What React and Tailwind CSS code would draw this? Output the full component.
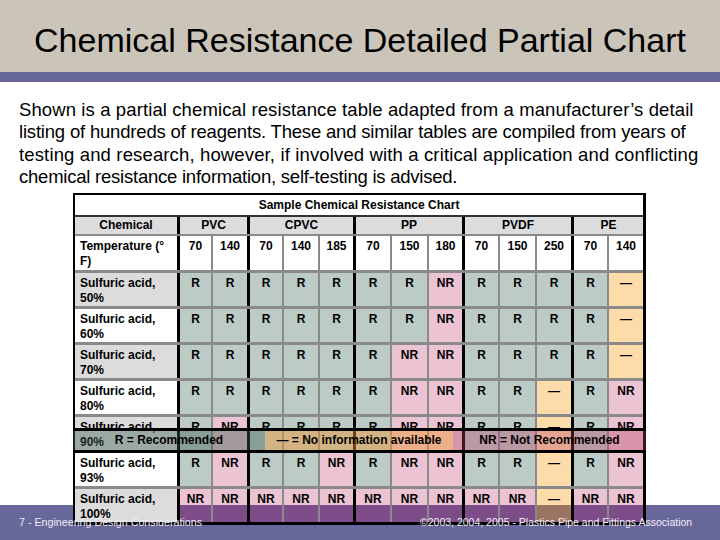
import React from "react";

// column widths incl. right border; group ends get a black rule
const cols = [
  "w-[33px] border-r-2 border-r-[#8a8a8a]",
  "w-[37px] border-r-[3px] border-r-black",
  "w-[34px] border-r-2 border-r-[#8a8a8a]",
  "w-[36px] border-r-2 border-r-[#8a8a8a]",
  "w-[36px] border-r-[3px] border-r-black",
  "w-[36px] border-r-2 border-r-[#8a8a8a]",
  "w-[37px] border-r-2 border-r-[#8a8a8a]",
  "w-[36px] border-r-[3px] border-r-black",
  "w-[35px] border-r-2 border-r-[#8a8a8a]",
  "w-[37px] border-r-2 border-r-[#8a8a8a]",
  "w-[37px] border-r-[3px] border-r-black",
  "w-[35px] border-r-2 border-r-[#8a8a8a]",
  "w-[34px]",
];

const groups = [
  { name: "PVC", cls: "w-[70px] border-r-[3px] border-r-black" },
  { name: "CPVC", cls: "w-[106px] border-r-[3px] border-r-black" },
  { name: "PP", cls: "w-[109px] border-r-[3px] border-r-black" },
  { name: "PVDF", cls: "w-[109px] border-r-[3px] border-r-black" },
  { name: "PE", cls: "w-[69px]" },
];

const temps = ["70", "140", "70", "140", "185", "70", "150", "180", "70", "150", "250", "70", "140"];

const rows = [
  { pct: "50%", shade: true, v: "R R R R R R R NR R R R R —" },
  { pct: "60%", shade: false, v: "R R R R R R R NR R R R R —" },
  { pct: "70%", shade: true, v: "R R R R R R NR NR R R R R —" },
  { pct: "80%", shade: false, v: "R R R R R R NR NR R R — R NR" },
  { pct: "90%", shade: true, v: "R NR R R R R NR NR R R — R NR", legend: true },
  { pct: "93%", shade: false, v: "R NR R R NR R NR NR R R — R NR" },
  { pct: "100%", shade: true, v: "NR NR NR NR NR NR NR NR NR NR — NR NR", last: true },
];

const cellBg = {
  R: "bg-[#bccbc5]",
  NR: "bg-[#ebc3d2]",
  "—": "bg-[#fddcaa]",
};

// bottom row sits partly over the purple footer band
const lastBg = {
  R: "bg-[linear-gradient(#bccbc5_16px,#5f6f8c_16px)]",
  NR: "bg-[linear-gradient(#ebc3d2_16px,#7d4c89_16px)]",
  "—": "bg-[linear-gradient(#fddcaa_16px,#9c7463_16px)]",
};

const Legend = () => (
  <div className="absolute left-[-2px] top-[11px] h-[25px] w-[573px] border-y-[3px] border-black flex z-10 text-[12px] font-bold text-black">
    <div className="w-[192px] bg-[rgba(60,90,80,0.4)] flex items-center justify-center">
      R = Recommended
    </div>
    <div className="w-[188px] bg-[rgba(240,150,50,0.45)] flex items-center justify-center">
      — = No information available
    </div>
    <div className="w-[193px] bg-[rgba(180,60,100,0.35)] flex items-center justify-center">
      NR = Not Recommended
    </div>
  </div>
);

const ChemTable = () => (
  <div className="relative z-10 ml-[73px] mt-[5px] w-[573px] border-l-2 border-t-2 border-r-[3px] border-b-[3px] border-black bg-white text-[12px] font-bold text-black leading-[14.5px]">
    <div className="h-[22px] border-b-2 border-b-[#333] flex items-center justify-center">
      Sample Chemical Resistance Chart
    </div>

    <div className="h-[19px] flex border-b-2 border-b-[#8a8a8a] bg-[#dcdcdc]">
      <div className="w-[105px] border-r-[3px] border-r-black flex items-center justify-center">
        Chemical
      </div>
      {groups.map((g) => (
        <div key={g.name} className={`${g.cls} flex items-center justify-center`}>
          {g.name}
        </div>
      ))}
    </div>

    <div className="h-[37px] flex border-b-[3px] border-b-[#8a8a8a]">
      <div className="w-[105px] border-r-[3px] border-r-black pl-[5px] pt-[3px]">
        Temperature (°
        <br />F)
      </div>
      {temps.map((t, i) => (
        <div key={i} className={`${cols[i]} text-center pt-[3px]`}>
          {t}
        </div>
      ))}
    </div>

    {rows.map((r) => {
      const vals = r.v.split(" ");
      return (
        <div
          key={r.pct}
          className={`relative flex ${r.last ? "h-[33px]" : "h-[36px] border-b-[3px] border-b-[#8a8a8a]"}`}
        >
          <div
            className={`w-[105px] border-r-[3px] border-r-black pl-[5px] pt-[3px] ${r.shade ? "bg-[#dcdcdc]" : "bg-white"}`}
          >
            Sulfuric acid,
            <br />
            {r.pct}
          </div>
          {vals.map((v, i) => (
            <div
              key={i}
              className={`${cols[i]} ${r.last ? lastBg[v] : cellBg[v]} text-center pt-[3px]`}
            >
              {v}
            </div>
          ))}
          {r.legend && <Legend />}
        </div>
      );
    })}
  </div>
);

const App = () => {
  return (
    <div className="relative w-[720px] h-[540px] overflow-hidden bg-white font-['Liberation_Sans',Arial,sans-serif] text-black">
      <div className="h-[72px] bg-[#cbc5b9] flex items-center justify-center pt-2">
        <h1 className="text-[34px] leading-none">Chemical Resistance Detailed Partial Chart</h1>
      </div>
      <div className="h-[10px] bg-[#676799]" />

      <div className="px-[19px] pt-[17px] text-[18.5px] leading-[22.3px] whitespace-nowrap">
        <p className="tracking-[0.11px]">
          Shown is a partial chemical resistance table adapted from a manufacturer’s detail
        </p>
        <p className="tracking-[-0.19px]">
          listing of hundreds of reagents. These and similar tables are compiled from years of
        </p>
        <p className="tracking-[0.14px]">
          testing and research, however, if involved with a critical application and conflicting
        </p>
        <p className="tracking-[-0.23px]">
          chemical resistance information, self-testing is advised.
        </p>
      </div>

      <ChemTable />

      {/* footer band of the slide template, behind the table */}
      <div className="absolute left-0 bottom-0 w-full h-[35px] bg-[#676799]" />
      <div className="absolute left-[19px] top-[516px] z-20 text-[10.7px] leading-[13px] text-[#eeeef6]">
        7 - Engineering Design Considerations
      </div>
      <div className="absolute left-[420px] top-[516px] z-20 text-[10.5px] leading-[13px] text-[#eeeef6]">
        ©2003, 2004, 2005 - Plastics Pipe and Fittings Association
      </div>
    </div>
  );
};

export default App;
